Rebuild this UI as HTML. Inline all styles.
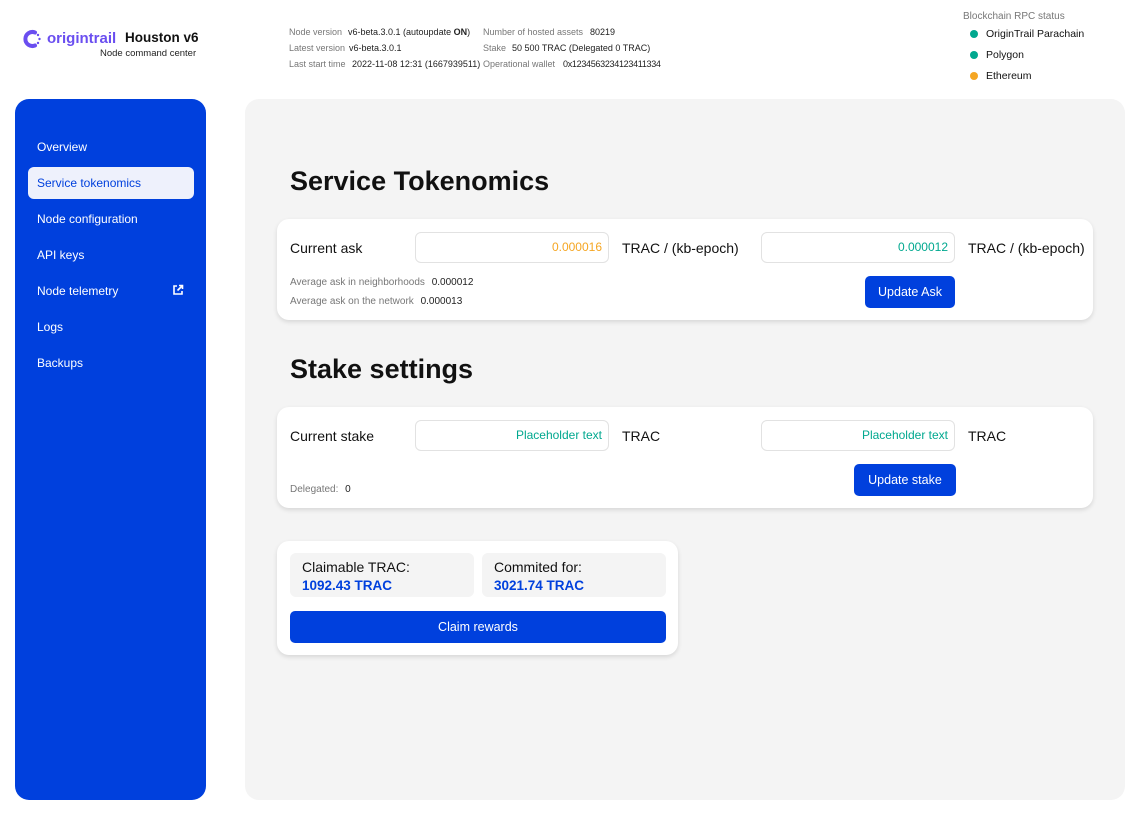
<!DOCTYPE html>
<html><head><meta charset="utf-8"><style>
*{box-sizing:border-box;margin:0;padding:0}
body{width:1137px;height:813px;background:#fff;font-family:"Liberation Sans",sans-serif;color:#111;position:relative;overflow:hidden}
.a{position:absolute;white-space:nowrap}
.s{font-size:9px;color:#777}
.v{font-size:9px;color:#222}
.s2{font-size:10px;color:#777}
.v2{font-size:10px;color:#222}
.side{position:absolute;left:15px;top:99px;width:191px;height:701px;background:#0040dd;border-radius:14px}
.nav{position:absolute;left:22px;font-size:12px;color:#fff}
.main{position:absolute;left:245px;top:99px;width:880px;height:701px;background:#f4f4f4;border-radius:14px}
.card{position:absolute;background:#fff;border-radius:12px;box-shadow:0 2px 5px rgba(0,0,0,.12)}
.inp{position:absolute;width:194px;height:31px;border:1px solid #e2e2e2;border-radius:6px;background:#fff;text-align:right;padding-right:6px;line-height:29px;font-size:12px}
.btn{position:absolute;background:#0040dd;color:#fff;border-radius:5px;font-size:12.5px;text-align:center}
h1{position:absolute;font-size:27px;font-weight:bold;color:#111}
.lbl{font-size:14px;color:#111}
.dot{display:inline-block;width:8px;height:8px;border-radius:50%;margin-right:8px;vertical-align:-1px}
</style></head><body>
<svg class="a" style="left:23px;top:29px" width="20" height="20" viewBox="0 0 20 20"><path d="M12 3.5A7 7 0 1 0 12 16.5" fill="none" stroke="#6a4ef0" stroke-width="4" stroke-linecap="round"/><circle cx="15" cy="6" r="1.2" fill="#6a4ef0"/><circle cx="16.5" cy="10" r="1.2" fill="#6a4ef0"/><circle cx="15" cy="14" r="1.2" fill="#6a4ef0"/></svg>
<div class="a" style="left:47px;top:30px;font-size:15px;color:#6a4ef0;font-weight:bold">origintrail</div>
<div class="a" style="left:125px;top:30px;font-size:13.5px;font-weight:bold">Houston v6</div>
<div class="a" style="left:100px;top:48px;font-size:9.5px;color:#222">Node command center</div>

<div class="a s" style="left:289px;top:27px">Node version</div><div class="a v" style="left:348px;top:27px">v6-beta.3.0.1 (autoupdate <b>ON</b>)</div>
<div class="a s" style="left:289px;top:43px">Latest version</div><div class="a v" style="left:349px;top:43px">v6-beta.3.0.1</div>
<div class="a s" style="left:289px;top:59px">Last start time</div><div class="a v" style="left:352px;top:59px">2022-11-08 12:31 (1667939511)</div>
<div class="a s" style="left:483px;top:27px">Number of hosted assets</div><div class="a v" style="left:590px;top:27px">80219</div>
<div class="a s" style="left:483px;top:43px">Stake</div><div class="a v" style="left:512px;top:43px">50 500 TRAC (Delegated 0 TRAC)</div>
<div class="a s" style="left:483px;top:59px">Operational wallet</div><div class="a v" style="left:563px;top:59px;letter-spacing:-0.3px">0x1234563234123411334</div>

<div class="a" style="left:963px;top:11px;font-size:10px;color:#777">Blockchain RPC status</div>
<div class="a" style="left:970px;top:28px;font-size:10.5px"><span class="dot" style="background:#00a88f"></span>OriginTrail Parachain</div>
<div class="a" style="left:970px;top:49px;font-size:10.5px"><span class="dot" style="background:#00a88f"></span>Polygon</div>
<div class="a" style="left:970px;top:70px;font-size:10.5px"><span class="dot" style="background:#f5a623"></span>Ethereum</div>

<div class="side">
<div class="nav" style="top:41px">Overview</div>
<div style="position:absolute;left:13px;top:68px;width:166px;height:32px;background:#eef1fc;border-radius:6px"></div>
<div class="nav" style="top:77px;color:#0040dd">Service tokenomics</div>
<div class="nav" style="top:113px">Node configuration</div>
<div class="nav" style="top:149px">API keys</div>
<div class="nav" style="top:185px">Node telemetry</div>
<svg style="position:absolute;left:157px;top:185px" width="12" height="12" viewBox="0 0 12 12" fill="none" stroke="#fff" stroke-width="1.6"><path d="M5 2H2v8h8V7M7 1.5h3.5V5M10.5 1.5 5.5 6.5"/></svg>
<div class="nav" style="top:221px">Logs</div>
<div class="nav" style="top:257px">Backups</div>
</div>

<div class="main"></div>
<h1 style="left:290px;top:166px">Service Tokenomics</h1>
<div class="card" style="left:277px;top:219px;width:816px;height:101px"></div>
<div class="a lbl" style="left:290px;top:240px">Current ask</div>
<div class="inp" style="left:415px;top:232px;color:#f5a623">0.000016</div>
<div class="a lbl" style="left:622px;top:240px">TRAC / (kb-epoch)</div>
<div class="inp" style="left:761px;top:232px;color:#00a88f">0.000012</div>
<div class="a lbl" style="left:968px;top:240px">TRAC / (kb-epoch)</div>
<div class="a s2" style="left:290px;top:277px">Average ask in neighborhoods <span class="v2" style="margin-left:4px">0.000012</span></div>
<div class="a s2" style="left:290px;top:296px">Average ask on the network <span class="v2" style="margin-left:4px">0.000013</span></div>
<div class="btn" style="left:865px;top:276px;width:90px;height:32px;line-height:32px">Update Ask</div>

<h1 style="left:290px;top:354px">Stake settings</h1>
<div class="card" style="left:277px;top:407px;width:816px;height:101px"></div>
<div class="a lbl" style="left:290px;top:428px">Current stake</div>
<div class="inp" style="left:415px;top:420px;color:#00a88f">Placeholder text</div>
<div class="a lbl" style="left:622px;top:428px">TRAC</div>
<div class="inp" style="left:761px;top:420px;color:#00a88f">Placeholder text</div>
<div class="a lbl" style="left:968px;top:428px">TRAC</div>
<div class="a s2" style="left:290px;top:484px">Delegated: <span class="v2" style="margin-left:4px">0</span></div>
<div class="btn" style="left:854px;top:464px;width:102px;height:32px;line-height:32px">Update stake</div>

<div class="card" style="left:277px;top:541px;width:401px;height:114px"></div>
<div class="a" style="left:290px;top:553px;width:184px;height:44px;background:#f4f4f4;border-radius:6px"></div>
<div class="a" style="left:482px;top:553px;width:184px;height:44px;background:#f4f4f4;border-radius:6px"></div>
<div class="a lbl" style="left:302px;top:559px">Claimable TRAC:</div>
<div class="a" style="left:302px;top:578px;font-size:13.5px;font-weight:bold;color:#0040dd">1092.43 TRAC</div>
<div class="a lbl" style="left:494px;top:559px">Commited for:</div>
<div class="a" style="left:494px;top:578px;font-size:13.5px;font-weight:bold;color:#0040dd">3021.74 TRAC</div>
<div class="btn" style="left:290px;top:611px;width:376px;height:32px;line-height:32px">Claim rewards</div>
</body></html>
